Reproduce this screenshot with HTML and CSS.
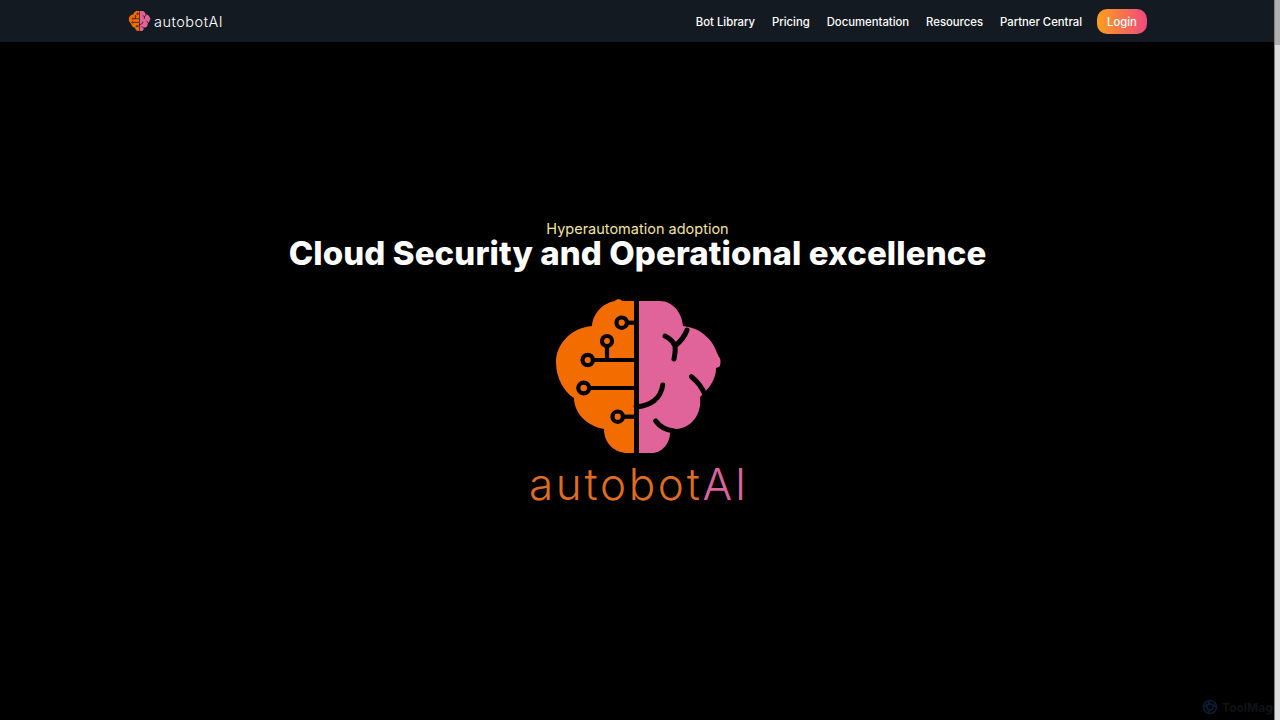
FILE: index.html
```html
<!DOCTYPE html>
<html lang="en">
<head>
<meta charset="utf-8">
<title>autobotAI</title>
<link rel="stylesheet" href="styles.css">
</head>
<body>
<svg class="defs" width="0" height="0" aria-hidden="true">
  <defs>
    <symbol id="brain" viewBox="550 295 175 165">
      <path class="left" d="M634 301 L622 301 C621 298.500 616 298.500 615 301 C603 303 593 313 592 326 C570 328 556 345 556 362 C556 378 564 392 574 398 C574 412 586 426 604 429 C604 443 614 453 628 453 L634 453 Z"/>
      <path class="right" d="M639 301 L660 301 C672 301 682 312 683 326 L688 327 C701 329 713 340 717 353 L719 357 C721 358 721 366 719 367 L716 368 C716 378 711 386 703 394 L700 397 C702 414 692 428 676 429 L670 430 C671 443 662 453 652 453 L639 453 Z"/>
      <g class="wire">
        <circle cx="621.700" cy="322.700" r="5.200"/><path d="M627 322.700H635"/>
        <circle cx="607" cy="341" r="5"/><path d="M607 346V360"/>
        <circle cx="587.700" cy="360" r="5.200"/><path d="M593 360H635"/>
        <circle cx="583.700" cy="388" r="5.400"/><path d="M589 388H635"/>
        <circle cx="617.700" cy="416.700" r="5.200"/><path d="M623 416.700H635"/>
      </g>
      <g class="groove">
        <path d="M687 330 C684 338 680 342 675 346 M665 336 C669 338 673 341 675 346 C675.500 350 675 354 674 359"/>
        <path d="M662.700 385 C661 398 651 406 636 406.700"/>
        <path d="M655.700 421 C660 427 665 430 674 431"/>
        <path d="M691.500 376.700 C698 382 703 389 705.500 396"/>
      </g>
    </symbol>
  </defs>
</svg>
<header class="nav">
  <a class="brand" href="#">
    <svg class="brand-icon" aria-hidden="true"><use href="#brain"/></svg>
    <span class="brand-name">autobotAI</span>
  </a>
  <nav class="links">
    <a href="#">Bot Library</a>
    <a href="#">Pricing</a>
    <a href="#">Documentation</a>
    <a href="#">Resources</a>
    <a href="#">Partner Central</a>
    <a class="login" href="#">Login</a>
  </nav>
</header>
<main class="hero">
  <p class="eyebrow">Hyperautomation adoption</p>
  <h1>Cloud Security and Operational excellence</h1>
  <svg class="hero-brain" aria-hidden="true"><use href="#brain"/></svg>
  <div class="wordmark">autobot<span>AI</span></div>
</main>
<div class="watermark">
  <svg class="mark" viewBox="0 0 16 16" aria-hidden="true">
    <circle cx="8" cy="8" r="6.500"/><circle cx="8" cy="8" r="3"/><path d="M2 8C5 4 11 4 14 8M8 2C4 6 5 11 8 14"/>
  </svg>
  <span>ToolMage</span>
</div>
<div class="scroll-track"><div class="scroll-thumb"></div></div>
</body>
</html>
```
FILE: styles.css
```css
* { box-sizing: border-box; }
html, body { height: 100%; }
body {
  margin: 0;
  height: 720px;
  overflow: hidden;
  background: #000;
  color: #fff;
  font-family: Inter, "Noto Sans", "Liberation Sans", sans-serif;
  display: flex;
  flex-direction: column;
}
.defs { position: absolute; }
.left { fill: #f36c00; }
.right { fill: #e0649a; }
.wire { fill: #f36c00; stroke: #000; stroke-width: 4.200; }
.wire path { fill: none; }
.groove { fill: none; stroke: #000; stroke-width: 5; stroke-linecap: round; }
.nav {
  height: 42px;
  flex: none;
  background: #141a22;
  display: flex;
  align-items: center;
  justify-content: space-between;
  padding: 0 133px 0 128px;
}
.brand { display: flex; align-items: center; gap: 3px; color: #fff; text-decoration: none; }
.brand-icon { width: 23px; height: 22px; }
.brand-name { font-size: 14.500px; font-weight: 300; letter-spacing: 0.5px; }
.links { display: flex; align-items: center; gap: 17px; }
.links a { color: #fff; text-decoration: none; font-size: 11.300px; font-weight: 500; padding-top: 1px; }
.links .login {
  width: 50px;
  height: 25px;
  margin-left: -2px;
  display: flex;
  align-items: center;
  justify-content: center;
  border-radius: 10px;
  background: linear-gradient(90deg, #ff9f1a, #f0487f);
}
.hero { display: flex; flex-direction: column; align-items: center; padding: 0 5px 0 0; margin-top: 179px; }
.eyebrow { margin: 0; font-size: 14.500px; line-height: 16px; font-weight: 400; color: #f2e3a0; }
h1 { margin: -1px 0 0; font-size: 33px; line-height: 34px; font-weight: 800; letter-spacing: 0.1px; }
.hero-brain { width: 175px; height: 165px; margin-top: 25px; }
.wordmark { font-size: 44px; line-height: 48px; margin-top: 0; font-weight: 300; color: #de6c22; letter-spacing: 2.700px; padding-left: 3px; }
.wordmark span { color: #d9639a; }
.scroll-track { position: absolute; top: 0; right: 0; bottom: 0; width: 6px; background: #dedede; border-left: 1px solid #808080; }
.scroll-thumb { height: 45px; background: #b0b0b0; }
.watermark {
  position: absolute;
  right: 0;
  bottom: 5px;
  display: flex;
  align-items: center;
  gap: 4px;
  color: #101215;
  font-size: 12px;
  font-weight: 700;
}
.mark { width: 16px; height: 16px; fill: none; stroke: #0c1a33; stroke-width: 1.500; }
```
